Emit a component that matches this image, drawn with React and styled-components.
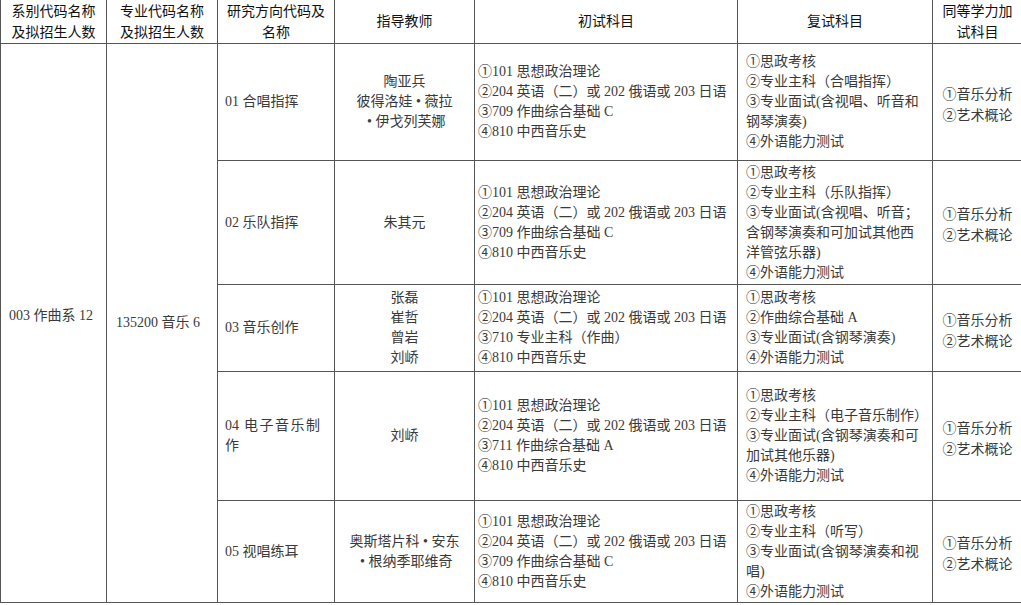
import styled, { createGlobalStyle } from "styled-components";

const Global = createGlobalStyle`
  html, body { margin: 0; padding: 0; background: #fff; }
  body { font-family: "Liberation Serif", "Noto Sans CJK SC", serif; }
`;

const Table = styled.table`
  border-collapse: collapse;
  table-layout: fixed;
  width: 1022px;
  font-size: 14px;
  color: #3a3a3a;
`;

const Row = styled.tr`
  height: ${(p) => p.$h}px;
`;

const Th = styled.th`
  height: 43px;
  padding: 0;
  border: 1px solid #555;
  border-top: 0;
  font-weight: normal;
  color: #111;
  line-height: 21px;
  text-align: center;
  vertical-align: middle;
`;

const Td = styled.td`
  border: 1px solid #555;
  padding: 0 ${(p) => p.$pad ?? 8}px ${(p) => p.$lift ?? 0}px;
  text-align: ${(p) => p.$align || "left"};
  vertical-align: middle;
  line-height: 20px;
  white-space: pre;
  overflow: hidden;
`;

const Line = styled.div``;

const Spread = styled.div`
  width: 95px;
  text-align: justify;
  text-align-last: justify;
`;

const Extra = styled.div`
  padding-top: 5px;
  line-height: 21px;
`;

const heads = [
  ["系别代码名称", "及拟招生人数"],
  ["专业代码名称", "及拟招生人数"],
  ["研究方向代码及", "名称"],
  ["指导教师"],
  ["初试科目"],
  ["复试科目"],
  ["同等学力加", "试科目"],
];

const widths = [106, 111, 117, 140, 263, 195, 90];

const exam = (third) => [
  "①101 思想政治理论",
  "②204 英语（二）或 202 俄语或 203 日语",
  third,
  "④810 中西音乐史",
];

const rows = [
  {
    h: 117,
    dir: ["01 合唱指挥"],
    teachers: ["陶亚兵", "彼得洛娃 • 薇拉", " • 伊戈列芙娜"],
    first: exam("③709 作曲综合基础 C"),
    retest: ["①思政考核", "②专业主科（合唱指挥）", "③专业面试(含视唱、听音和", "钢琴演奏)", "④外语能力测试"],
  },
  {
    h: 124,
    dir: ["02 乐队指挥"],
    teachers: ["朱其元"],
    first: exam("③709 作曲综合基础 C"),
    retest: ["①思政考核", "②专业主科（乐队指挥）", "③专业面试(含视唱、听音；", "含钢琴演奏和可加试其他西", "洋管弦乐器)", "④外语能力测试"],
  },
  {
    h: 87,
    dir: ["03 音乐创作"],
    teachers: ["张磊", "崔哲", "曾岩", "刘峤"],
    first: exam("③710 专业主科（作曲）"),
    retest: ["①思政考核", "②作曲综合基础 A", "③专业面试(含钢琴演奏)", "④外语能力测试"],
  },
  {
    h: 129,
    dir: ["04 电子音乐制", "作"],
    spread: true,
    teachers: ["刘峤"],
    first: exam("③711 作曲综合基础 A"),
    retest: ["①思政考核", "②专业主科（电子音乐制作）", "③专业面试(含钢琴演奏和可", "加试其他乐器)", "④外语能力测试"],
  },
  {
    h: 102,
    dir: ["05 视唱练耳"],
    teachers: ["奥斯塔片科 • 安东", " • 根纳季耶维奇"],
    first: exam("③709 作曲综合基础 C"),
    retest: ["①思政考核", "②专业主科（听写）", "③专业面试(含钢琴演奏和视", "唱)", "④外语能力测试"],
  },
];

const extra = ["①音乐分析", "②艺术概论"];

function Lines({ items }) {
  return items.map((t, i) => <Line key={i}>{t}</Line>);
}

function App() {
  return (
    <>
      <Global />
      <Table>
        <colgroup>
          {widths.map((w, i) => (
            <col key={i} style={{ width: w }} />
          ))}
        </colgroup>
        <thead>
          <tr>
            {heads.map((h, i) => (
              <Th key={i}>
                <Lines items={h} />
              </Th>
            ))}
          </tr>
        </thead>
        <tbody>
          {rows.map((r, i) => (
            <Row key={i} $h={r.h}>
              {i === 0 && (
                <>
                  <Td rowSpan={5} $pad={8} $lift={14}>003 作曲系 12</Td>
                  <Td rowSpan={5} $pad={9}>135200 音乐 6</Td>
                </>
              )}
              <Td $pad={7}>
                {r.spread ? (
                  <>
                    <Spread>{r.dir[0]}</Spread>
                    <Line>{r.dir[1]}</Line>
                  </>
                ) : (
                  <Lines items={r.dir} />
                )}
              </Td>
              <Td $align="center" $pad={2}>
                <Lines items={r.teachers} />
              </Td>
              <Td $pad={3}>
                <Lines items={r.first} />
              </Td>
              <Td $pad={8}>
                <Lines items={r.retest} />
              </Td>
              <Td $align="center" $pad={2}>
                <Extra>
                  <Lines items={extra} />
                </Extra>
              </Td>
            </Row>
          ))}
        </tbody>
      </Table>
    </>
  );
}

export default App;
